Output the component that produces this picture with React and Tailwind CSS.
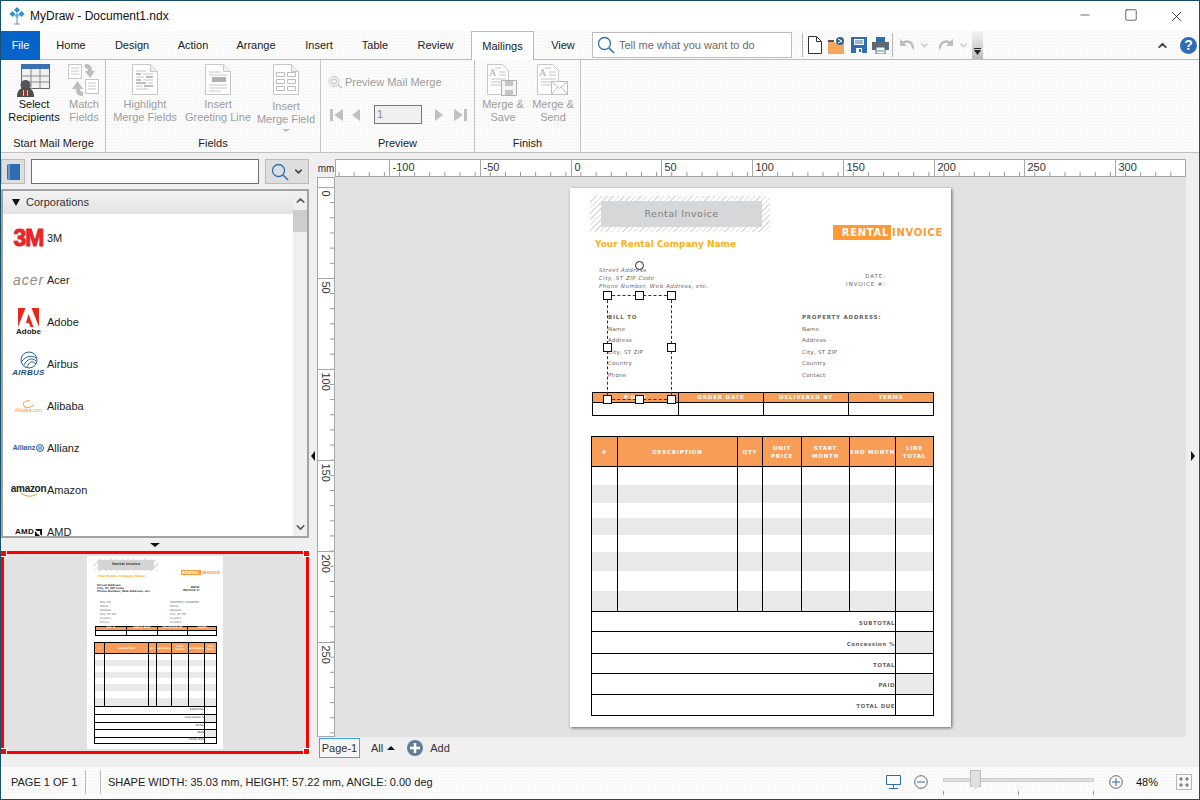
import { ChevronDown, ChevronUp, Minus, Square, X } from "lucide-react";

const texture = "bg-[#fbfbfb] bg-[radial-gradient(#f1f1f1_1px,transparent_1px)] bg-[length:3px_3px]";

const tabs = [
  ["Home", "w-[62px]"],
  ["Design", "w-[60px]"],
  ["Action", "w-[62px]"],
  ["Arrange", "w-[64px]"],
  ["Insert", "w-[62px]"],
  ["Table", "w-[50px]"],
  ["Review", "w-[71px]"],
];

function AppLogo() {
  return (
    <svg viewBox="0 0 16 18" className="w-4 h-[18px]">
      <path d="M8 10v7M5 17h6" stroke="#7a8a94" strokeWidth="1" fill="none" />
      <path d="M8 0l3 3-3 3-3-3z" fill="#2f8fd0" />
      <path d="M3.5 4l3 3-3 3-3-3z" fill="#2f8fd0" />
      <path d="M12.5 4l3 3-3 3-3-3z" fill="#2f8fd0" />
      <path d="M8 6l2.5 2.5L8 11 5.5 8.5z" fill="#58b0e4" />
    </svg>
  );
}

function TitleBar() {
  return (
    <div className="h-[30px] flex items-center bg-white shrink-0">
      <div className="ml-[8px]">
        <AppLogo />
      </div>
      <span className="ml-[5px] text-[12px] text-[#111]">MyDraw - Document1.ndx</span>
      <div className="ml-auto flex">
        <div className="w-[46px] flex justify-center">
          <Minus className="w-[14px] h-[14px]" strokeWidth={1} />
        </div>
        <div className="w-[46px] flex justify-center">
          <Square className="w-[14px] h-[14px]" strokeWidth={1} />
        </div>
        <div className="w-[45px] flex justify-center">
          <X className="w-[17px] h-[17px]" strokeWidth={1} />
        </div>
      </div>
    </div>
  );
}

function QuickIcons() {
  return (
    <div className="flex items-center h-full">
      <div className="ml-[10px] w-px h-[24px] bg-[#b5b5b5]" />
      <svg viewBox="0 0 14 18" className="ml-[5px] w-[14px] h-[18px]">
        <path d="M.5.5h8l5 5v12H.5z M8.5.5v5h5" fill="#fff" stroke="#333" />
      </svg>
      <svg viewBox="0 0 17 17" className="ml-[6px] w-[17px] h-[17px]">
        <path d="M0 4h6l1 2h9v11H0z" fill="#f6a65a" />
        <path d="M0 3h6v2H0z" fill="#555" />
        <circle cx="12" cy="4" r="4" fill="#33638f" />
        <path d="M10 2l4 2-4 2" fill="none" stroke="#fff" strokeWidth="1" />
      </svg>
      <svg viewBox="0 0 16 16" className="ml-[6px] w-[16px] h-[16px]">
        <path d="M0 0h16v16H0z" fill="#2f6cb0" />
        <path d="M3 2h10v6H3z" fill="#fff" />
        <path d="M4 4h8M4 6h8" stroke="#2f6cb0" strokeWidth="1" />
        <path d="M5 11h6v5H5z" fill="#fff" />
        <path d="M8 12h2v3H8z" fill="#2f6cb0" />
      </svg>
      <svg viewBox="0 0 17 17" className="ml-[5px] w-[17px] h-[17px]">
        <path d="M4 0h9v5H4z" fill="#2f6cb0" />
        <path d="M0 5h17v8H0z" fill="#5d6b74" />
        <path d="M4 10h9v7H4z" fill="#fff" stroke="#5d6b74" />
        <path d="M5 14h7" stroke="#7fd0e0" strokeWidth="2" />
      </svg>
      <div className="ml-[3px] w-px h-[24px] bg-[#b5b5b5]" />
      <svg viewBox="0 0 16 14" className="ml-[6px] w-[16px] h-[14px]">
        <path d="M1 1v7h7L5.5 5.5C8 4 12 5 13 10l2 2c1-7-5-12-11-8.500z" fill="#bdbdbd" />
      </svg>
      <ChevronDown className="ml-[4px] w-[11px] h-[11px] text-[#c4c4c4]" strokeWidth={3} />
      <svg viewBox="0 0 16 14" className="ml-[8px] w-[16px] h-[14px]">
        <path d="M15 1v7H8l2.500-2.500C8 4 4 5 3 10l-2 2c-1-7 5-12 11-8.500z" fill="#bdbdbd" />
      </svg>
      <ChevronDown className="ml-[4px] w-[11px] h-[11px] text-[#c4c4c4]" strokeWidth={3} />
      <div className="ml-[3px] w-[11px] h-full bg-gradient-to-b from-[#f4f4f4] to-[#bcbcbc] flex items-end justify-center pb-[4px]">
        <svg viewBox="0 0 7 7" className="w-[7px] h-[7px]">
          <path d="M0 0h7v1H0zM0 2h7L3.500 7z" fill="#222" />
        </svg>
      </div>
    </div>
  );
}

function TabBar() {
  return (
    <div className={`h-[29px] flex shrink-0 border-b border-[#b9b9b9] text-[11px] text-[#222] ${texture}`}>
      <div className="w-[39px] h-[29px] bg-[#0563c9] text-white flex items-center justify-center">File</div>
      {tabs.map(([name, width]) => (
        <div key={name} className={`${width} flex items-center justify-center`}>
          {name}
        </div>
      ))}
      <div className="w-[63px] h-[29px] bg-white border border-b-0 border-[#b9b9b9] flex items-center justify-center">
        Mailings
      </div>
      <div className="w-[58px] flex items-center justify-center">View</div>
      <div className="w-[200px] h-[26px] mt-[1px] bg-white border border-[#bdbdbd] flex items-center">
        <svg viewBox="0 0 18 18" className="ml-[4px] w-[18px] h-[18px]">
          <circle cx="7.500" cy="7.500" r="6" fill="none" stroke="#2d72b8" strokeWidth="1.300" />
          <path d="M12 12l5 5" stroke="#2d72b8" strokeWidth="1.600" />
        </svg>
        <span className="ml-[4px] text-[#6b6b6b]">Tell me what you want to do</span>
      </div>
      <QuickIcons />
      <div className="ml-auto flex items-center">
        <ChevronUp className="w-[13px] h-[13px] text-[#444]" strokeWidth={3.500} />
        <div className="ml-[11px] mr-[2px] w-[17px] h-[17px] rounded-full bg-[#2f6db5] text-white text-[14px] font-bold flex items-center justify-center">
          ?
        </div>
      </div>
    </div>
  );
}

function Page({ children, className = "" }) {
  return (
    <svg viewBox="0 0 26 31" className={`w-[26px] h-[31px] ${className}`}>
      <path d="M.5.5h18l7 7v23H.5z" fill="#fff" stroke="#c8c8c8" />
      <path d="M18.500.5v7h7" fill="#efefef" stroke="#c8c8c8" />
      {children}
    </svg>
  );
}

const icons = {
  select: (
    <svg viewBox="0 0 34 33" className="w-[34px] h-[33px]">
      <path d="M4.500.5h28v24h-28z" fill="#f1f1f1" stroke="#666" />
      <path d="M4 0h29v5H4z" fill="#3a6fb0" />
      <path d="M4 12h29M4 18h29M14 5v20M23 5v20" stroke="#888" />
      <circle cx="8.500" cy="21" r="5" fill="#555" />
      <path d="M0 33c0-7 3-9 8.500-9s8.500 2 8.500 9z" fill="#4c4c4c" />
      <path d="M7.500 25h2v7h-2z" fill="#e2231a" />
      <path d="M6 26h1v6H6zM10 26h1v6h-1z" fill="#f4d23c" />
    </svg>
  ),
  match: (
    <svg viewBox="0 0 32 32" className="w-[32px] h-[32px]">
      <path d="M.500.500h13v14H.500zM17.500 15.500h13v14h-13z" fill="#fff" stroke="#c4c4c4" />
      <path d="M3 4h8M3 7h8M3 10h8M20 19h8M20 22h8M20 25h8" stroke="#c8c8c8" />
      <path d="M17 0c5 0 7 2 7 7h3l-5 7-5-7h3c0-2-1-3-3-3z" fill="#bdbdbd" />
      <path d="M15 32c-5 0-7-2-7-7H4l5.500-8 5.500 8h-3c0 2 1 3 3 3z" fill="#bdbdbd" />
    </svg>
  ),
  highlight: (
    <Page>
      <path d="M4 7h10M4 10h5M11 10h10M4 13h8M14 13h7M4 16h5M11 16h10M4 19h10M16 19h5M4 22h6M12 22h9M4 25h12" stroke="#c4c4c4" />
      <path d="M4 10h5M14 13h7M4 16h5M4 19h10M12 22h9" stroke="#9a9a9a" />
    </Page>
  ),
  greeting: (
    <Page>
      <path d="M4 8h12M4 11h18M4 21h18M4 24h18M4 27h12" stroke="#c8c8c8" />
      <path d="M7 13h14v5H7z" fill="#b0b0b0" />
    </Page>
  ),
  field: (
    <Page>
      <path d="M3.500 8.500h8v4h-8zM14.500 8.500h8v4h-8zM3.500 15.500h8v4h-8zM14.500 15.500h8v4h-8zM3.500 22.500h8v4h-8zM14.500 22.500h8v4h-8z" fill="none" stroke="#bdbdbd" />
    </Page>
  ),
  save: (
    <svg viewBox="0 0 32 32" className="w-[32px] h-[32px]">
      <path d="M.500.500h15l6 6v24H.500z" fill="#fff" stroke="#c8c8c8" />
      <path d="M8 4h6M12 8h7M12 11h7M4 15h15M4 18h15M4 21h10" stroke="#c4c4c4" />
      <text x="2" y="12" fontSize="10" fill="#aaa" fontFamily="Liberation Serif, serif">A</text>
      <path d="M14.500 16.500h15v15h-15z" fill="#f3f3f3" stroke="#b0b0b0" />
      <path d="M18 17h8v5h-8zM18 26h8v5h-8z" fill="#c4c4c4" />
    </svg>
  ),
  send: (
    <svg viewBox="0 0 32 32" className="w-[32px] h-[32px]">
      <path d="M.500.500h15l6 6v24H.500z" fill="#fff" stroke="#c8c8c8" />
      <path d="M8 4h6M12 8h7M12 11h7M4 15h15M4 18h10M4 21h10" stroke="#c4c4c4" />
      <text x="2" y="12" fontSize="10" fill="#aaa" fontFamily="Liberation Serif, serif">A</text>
      <path d="M14.500 17.500h16v13h-16z" fill="#fff" stroke="#bdbdbd" />
      <path d="M14.500 17.500l8 7 8-7M14.500 30.500l6-7M30.500 30.500l-6-7" fill="none" stroke="#bdbdbd" />
    </svg>
  ),
};

function RibbonButton({ icon, lines, active, width, down }) {
  return (
    <div className={`${width} flex flex-col items-center text-center leading-[13px] ${active ? "text-[#111]" : "text-[#9d9d9d]"}`}>
      <div className={`h-[34px] mt-[4px] ${down ? "mb-[2px]" : ""} flex items-start justify-center`}>{icon}</div>
      <div className="whitespace-nowrap">{lines[0]}</div>
      <div className="whitespace-nowrap">{lines[1]}</div>
      {down && <div className="mt-[3px] w-0 h-0 border-x-[4px] border-x-transparent border-t-[3px] border-t-[#bcbcbc]" />}
    </div>
  );
}

function Group({ label, width, children }) {
  return (
    <div className={`${width} h-full flex flex-col border-r border-[#c6c6c6]`}>
      <div className="flex-1">{children}</div>
      <div className="h-[18px] flex items-center justify-center text-[#222]">{label}</div>
    </div>
  );
}

function NavIcon({ d, width, box }) {
  return (
    <svg viewBox={box} className={`${width} h-[12px]`}>
      <path d={d} fill="#c0c0c0" />
    </svg>
  );
}

function Ribbon() {
  return (
    <div className={`h-[93px] shrink-0 flex border-b border-[#c0c0c0] text-[11px] ${texture}`}>
      <Group label="Start Mail Merge" width="w-[105px] pl-px">
        <div className="flex -ml-px">
          <RibbonButton icon={icons.select} lines={["Select", "Recipients"]} active width="w-[66px]" />
          <RibbonButton icon={icons.match} lines={["Match", "Fields"]} width="w-[34px]" />
        </div>
      </Group>
      <Group label="Fields" width="w-[215px]">
        <div className="flex">
          <RibbonButton icon={icons.highlight} lines={["Highlight", "Merge Fields"]} width="w-[78px]" />
          <RibbonButton icon={icons.greeting} lines={["Insert", "Greeting Line"]} width="w-[68px]" />
          <RibbonButton icon={icons.field} lines={["Insert", "Merge Field"]} width="w-[68px]" down />
        </div>
      </Group>
      <Group label="Preview" width="w-[154px]">
        <div className="pt-[15px]">
          <div className="flex items-center h-[14px] text-[#9d9d9d] whitespace-nowrap">
            <svg viewBox="0 0 16 14" className="ml-[6px] w-[16px] h-[14px]">
              <circle cx="7" cy="6.500" r="5" fill="#f4f4f4" stroke="#c8c8c8" />
              <circle cx="7" cy="6.500" r="2.500" fill="none" stroke="#bbb" />
              <path d="M11 10l4 3" stroke="#c0c0c0" strokeWidth="1.500" />
            </svg>
            <span className="ml-[2px]">Preview Mail Merge</span>
          </div>
          <div className="flex items-center mt-[16px]">
            <NavIcon box="0 0 14 12" width="ml-[8px] w-[14px]" d="M1 0h3v12H1zM14 0v12L5 6z" />
            <NavIcon box="0 0 10 12" width="ml-[8px] w-[10px]" d="M9 0v12L1 6z" />
            <div className="ml-[13px] w-[48px] h-[19px] bg-[#f0f0f0] border border-[#777] flex items-center pl-[2px] text-[#8a8a8a]">
              1
            </div>
            <NavIcon box="0 0 10 12" width="ml-[12px] w-[10px]" d="M1 0v12l8-6z" />
            <NavIcon box="0 0 14 12" width="ml-[10px] w-[14px]" d="M0 0v12l9-6zM10 0h3v12h-3z" />
          </div>
        </div>
      </Group>
      <Group label="Finish" width="w-[106px]">
        <div className="flex pl-px">
          <RibbonButton icon={icons.save} lines={["Merge &", "Save"]} width="w-[54px]" />
          <RibbonButton icon={icons.send} lines={["Merge &", "Send"]} width="w-[46px]" />
        </div>
      </Group>
    </div>
  );
}

const corporations = [
  {
    name: "3M",
    logo: <span className="text-[23px] leading-none font-bold tracking-[-1px] text-[#e8262a] [-webkit-text-stroke:1px_#e8262a]">3M</span>,
  },
  {
    name: "Acer",
    logo: <span className="text-[14px] leading-none italic text-[#8d8d82] tracking-[1px]">acer</span>,
  },
  {
    name: "Adobe",
    logo: (
      <div className="flex flex-col items-center">
        <svg viewBox="0 0 21 19" className="w-[21px] h-[19px]">
          <path d="M0 0h7.500L0 19zM21 0h-7.500L21 19zM10.500 6l5 13h-3l-1.500-4H8z" fill="#e8261c" />
        </svg>
        <span className="text-[8px] leading-[9px] font-bold text-[#222]">Adobe</span>
      </div>
    ),
  },
  {
    name: "Airbus",
    logo: (
      <div className="flex flex-col items-center">
        <svg viewBox="0 0 18 18" className="w-[18px] h-[18px]">
          <circle cx="9" cy="9" r="8" fill="none" stroke="#28608f" strokeWidth="1" />
          <path d="M2 10c4-5 10-6 14-3M4 14c3-6 8-8 12-4M7 16c2-5 5-7 9-3" fill="none" stroke="#28608f" strokeWidth="1" />
        </svg>
        <span className="text-[8px] leading-[8px] font-bold italic tracking-[0.300px] text-[#17507f]">AIRBUS</span>
      </div>
    ),
  },
  {
    name: "Alibaba",
    logo: (
      <div className="flex flex-col items-center">
        <svg viewBox="0 0 14 8" className="w-[14px] h-[8px]">
          <path d="M9 1C4 0 1 3 3 6s7 1 10-1" fill="none" stroke="#f49a3c" strokeWidth="1" />
        </svg>
        <span className="text-[5px] leading-[5px] text-[#f49a3c]">Alibaba.com</span>
      </div>
    ),
  },
  {
    name: "Allianz",
    logo: (
      <div className="flex items-center gap-px">
        <span className="text-[7px] font-bold text-[#1a63ad]">Allianz</span>
        <svg viewBox="0 0 8 8" className="w-[8px] h-[8px]">
          <circle cx="4" cy="4" r="3.500" fill="none" stroke="#1a63ad" />
          <path d="M3 2v4M5 2v4" stroke="#1a63ad" />
        </svg>
      </div>
    ),
  },
  {
    name: "Amazon",
    logo: (
      <div className="flex flex-col items-center">
        <span className="text-[10px] leading-[9px] font-bold tracking-[-0.300px] text-[#222]">amazon</span>
        <svg viewBox="0 0 20 4" className="w-[20px] h-[4px]">
          <path d="M2 0c5 4 11 4 16 1" fill="none" stroke="#f39a20" strokeWidth="1" />
        </svg>
      </div>
    ),
  },
  {
    name: "AMD",
    logo: (
      <div className="flex items-center gap-px">
        <span className="text-[8px] font-bold tracking-[0.300px] text-[#111]">AMD</span>
        <svg viewBox="0 0 7 7" className="w-[7px] h-[7px]">
          <path d="M0 0h7v7L5 5V2H2zM0 2l2 2v1h1l2 2H0z" fill="#111" />
        </svg>
      </div>
    ),
  },
];

function CorporationList() {
  return (
    <div className="mt-[5px] h-[349px] border-2 border-[#a3a3a3] flex overflow-hidden bg-white">
      <div className="flex-1 min-w-0">
        <div className="h-[23px] flex items-center bg-gradient-to-b from-[#f2f2f2] to-[#e3e3e3] text-[11px] text-[#333]">
          <div className="ml-[9px] w-0 h-0 border-x-[4px] border-x-transparent border-t-[7px] border-t-[#111]" />
          <span className="ml-[6px]">Corporations</span>
        </div>
        <div className="pt-[3px]">
          {corporations.map((item) => (
            <div key={item.name} className="h-[42px] flex items-center text-[11px] text-[#222]">
              <div className="ml-[9px] w-[33px] flex justify-center">{item.logo}</div>
              <span className="ml-[2px]">{item.name}</span>
            </div>
          ))}
        </div>
      </div>
      <div className="w-[14px] bg-[#f0f0f0] flex flex-col items-center">
        <ChevronUp className="mt-[3px] w-[13px] h-[13px] text-[#606060]" strokeWidth={3} />
        <div className="mt-[3px] w-full h-[22px] bg-[#cdcdcd]" />
        <ChevronDown className="mt-auto mb-[2px] w-[13px] h-[13px] text-[#606060]" strokeWidth={3} />
      </div>
    </div>
  );
}

const hatch = "bg-[repeating-linear-gradient(135deg,#dcdcdc_0,#dcdcdc_1px,#ffffff_1px,#ffffff_4px)]";
const stripe = "bg-[#e9e9e9]";

function ItemsTable({ columns, head, rows, totals, totalCol, headClass, headText, totalText, className }) {
  return (
    <div className={`${className} border border-black bg-white`}>
      <div className={`grid ${columns} ${headClass} bg-[#f79d58] border-b border-black`}>
        {head.map((label, i) => (
          <div key={i} className={`flex items-center justify-center text-center text-white font-bold ${headText} ${i ? "border-l border-black" : ""}`}>
            {label}
          </div>
        ))}
      </div>
      {rows.map((height, r) => (
        <div key={r} className={`grid ${columns} ${height} ${r % 2 ? stripe : ""}`}>
          {head.map((_, i) => (
            <div key={i} className={i ? "border-l border-black" : ""} />
          ))}
        </div>
      ))}
      {totals.map(([label, height], r) => (
        <div key={label} className={`grid ${totalCol} ${height} border-t border-black`}>
          <div className={`flex items-center justify-end font-bold text-[#666] ${totalText}`}>{label}</div>
          <div className={`border-l border-black ${r % 2 ? stripe : ""}`} />
        </div>
      ))}
    </div>
  );
}

const tableHead = ["#", "DESCRIPTION", "QTY", "UNIT PRICE", "START MONTH", "END\u00A0MONTH", "LINE TOTAL"];

function OrderTable({ columns, headClass, bodyClass, textClass, className }) {
  const labels = ["P.O. #", "ORDER DATE", "DELIVERED BY", "TERMS"];
  return (
    <div className={`${className} border border-black`}>
      <div className={`grid ${columns} ${headClass} bg-[#f79d58] border-b border-black`}>
        {labels.map((label, i) => (
          <div key={label} className={`flex items-center justify-center text-white font-bold ${textClass} ${i ? "border-l border-black" : ""}`}>
            {label}
          </div>
        ))}
      </div>
      <div className={`grid ${columns} ${bodyClass} bg-white`}>
        {labels.map((label, i) => (
          <div key={label} className={i ? "border-l border-black" : ""} />
        ))}
      </div>
    </div>
  );
}

function Thumbnail() {
  return (
    <div className="relative h-[203px] border-[3px] border-[#ff0000] bg-[#e2e2e2] flex justify-center pt-[2px] overflow-visible">
      <div className="w-[136px] h-[193px] bg-white font-['DejaVu_Sans'] text-[#555] leading-none">
        <div className="flex justify-between pt-[3px]">
          <div className="ml-[7px]">
            <div className={`w-[64px] h-[12px] ${hatch} px-[4px] py-px`}>
              <div className="h-full bg-[#d4d4d4] flex items-center justify-center text-[3.500px] font-bold text-[#444]">
                Rental Invoice
              </div>
            </div>
            <div className="mt-[4px] ml-[4px] text-[3px] font-bold text-[#ffb020]">Your Rental Company Name</div>
          </div>
          <div className="mt-[11px] mr-[3px] flex items-center text-[4px] font-bold h-[5px]">
            <span className="w-[20px] h-[5px] bg-[#ff9933] text-white flex items-center justify-center">RENTAL</span>
            <span className="ml-px text-[#ff9933]">INVOICE</span>
          </div>
        </div>
        <div className="flex justify-between mt-[6px] text-[2.800px] text-[#444] font-bold">
          <div className="ml-[10px] leading-[3px]">
            <div>Street Address</div>
            <div>City, ST ZIP Code</div>
            <div>Phone Number, Web Address, etc.</div>
          </div>
          <div className="mt-[2px] mr-[23px] text-right leading-[3px]">
            <div>DATE:</div>
            <div>INVOICE #:</div>
          </div>
        </div>
        <div className="flex mt-[7px] text-[2.800px] leading-[4px] text-[#666]">
          <div className="ml-[13px] w-[70px]">
            <div>BILL TO</div>
            <div>Name</div>
            <div>Address</div>
            <div>City, ST ZIP</div>
            <div>Country</div>
            <div>Phone</div>
          </div>
          <div>
            <div>PROPERTY ADDRESS:</div>
            <div>Name</div>
            <div>Address</div>
            <div>City, ST ZIP</div>
            <div>Country</div>
            <div>Contact</div>
          </div>
        </div>
        <OrderTable
          className="ml-[8px] mt-[2px] w-[122px]"
          columns="grid-cols-[30px_31px_30px_29px]"
          headClass="h-[4px]"
          bodyClass="h-[4px]"
          textClass="text-[2.500px]"
        />
        <ItemsTable
          className="ml-[7px] mt-[6px] w-[123px]"
          columns="grid-cols-[9px_44px_8px_15px_17px_16px_12px]"
          totalCol="grid-cols-[109px_12px]"
          head={tableHead}
          rows={["h-[6px]", "h-[6px]", "h-[6px]", "h-[6px]", "h-[6px]", "h-[7px]", "h-[7px]", "h-[8px]"]}
          totals={[
            ["SUBTOTAL", "h-[8px]"],
            ["Concession %", "h-[8px]"],
            ["TOTAL", "h-[7px]"],
            ["PAID", "h-[8px]"],
            ["TOTAL DUE", "h-[6px]"],
          ]}
          headClass="h-[11px]"
          headText="text-[2.200px] leading-[3px]"
          totalText="text-[2.500px]"
        />
      </div>
      {["-left-[3px] -top-[3px]", "-right-[3px] -top-[3px]", "-left-[3px] -bottom-[3px]", "-right-[3px] -bottom-[3px]"].map((pos) => (
        <div key={pos} className={`absolute ${pos} w-[5px] h-[5px] bg-[#ff0000] outline outline-1 outline-white`} />
      ))}
    </div>
  );
}

function LeftPanel() {
  return (
    <div className="w-[308px] shrink-0 flex flex-col pt-[6px]">
      <div className="flex h-[25px]">
        <div className="w-[24px] bg-[#dedede] border border-[#bbb] flex items-center justify-center">
          <svg viewBox="0 0 13 16" className="w-[13px] h-[16px]">
            <path d="M0 1.500C0 .500 1 0 2 0h11v16H2c-1 0-2-.500-2-1.500z" fill="#2f6cb0" />
            <path d="M2 0v16" stroke="#a9c6e5" strokeWidth="1" />
          </svg>
        </div>
        <div className="ml-[6px] w-[228px] bg-white border border-[#707070]" />
        <div className="ml-[6px] w-[44px] bg-[#dedede] border border-[#bbb] flex items-center">
          <svg viewBox="0 0 18 18" className="ml-[5px] w-[18px] h-[18px]">
            <circle cx="7.500" cy="7.500" r="6" fill="none" stroke="#2d72b8" strokeWidth="1.300" />
            <path d="M12 12l5 5" stroke="#2d72b8" strokeWidth="1.600" />
          </svg>
          <ChevronDown className="ml-[4px] w-[11px] h-[11px] text-[#444]" strokeWidth={3.500} />
        </div>
      </div>
      <CorporationList />
      <div className="h-[13px] flex justify-center items-center">
        <div className="w-0 h-0 border-x-[5px] border-x-transparent border-t-[4px] border-t-[#111]" />
      </div>
      <Thumbnail />
    </div>
  );
}

const topMajors = [-100, -50, 0, 50, 100, 150, 200, 250, 300];

function TopRuler() {
  const minors = Array.from({ length: 57 }, (_, i) => 4 + i * 15.125);
  return (
    <svg width="851" height="18" className="block">
      <rect x="0.500" y="0.500" width="850" height="17" fill="#fff" stroke="#a8a8a8" />
      {minors.map((x) => (
        <line key={x} x1={x} x2={x} y1="13" y2="17" stroke="#999" />
      ))}
      {topMajors.map((v, i) => {
        const x = Math.round(54 + i * 90.75) + 0.5;
        return (
          <g key={v}>
            <line x1={x} x2={x} y1="0" y2="17" stroke="#a8a8a8" />
            <text x={x + 3} y="12" fontSize="11" fill="#333" fontFamily="Liberation Sans, sans-serif">
              {v}
            </text>
          </g>
        );
      })}
    </svg>
  );
}

function LeftRuler() {
  const minors = Array.from({ length: 37 }, (_, i) => 10.5 + i * 15.15);
  return (
    <svg width="18" height="560" className="block shrink-0">
      <rect x="0.500" y="0.500" width="17" height="559" fill="#fff" stroke="#a8a8a8" />
      {minors.map((y) => (
        <line key={y} x1="13" x2="17" y1={y} y2={y} stroke="#999" />
      ))}
      {[0, 50, 100, 150, 200, 250].map((v, i) => {
        const y = 10.5 + i * 91;
        return (
          <g key={v}>
            <line x1="0" x2="17" y1={y} y2={y} stroke="#a8a8a8" />
            <text x="5" y={y + 3} fontSize="11" fill="#333" fontFamily="Liberation Sans, sans-serif" transform={`rotate(90 5 ${y + 3})`}>
              {v}
            </text>
          </g>
        );
      })}
    </svg>
  );
}

const handles = [
  "-left-[5px] -top-[5px]",
  "left-[27px] -top-[5px]",
  "-right-[5px] -top-[5px]",
  "-left-[5px] top-[47px]",
  "-right-[5px] top-[47px]",
  "-left-[5px] -bottom-[5px]",
  "left-[27px] -bottom-[5px]",
  "-right-[5px] -bottom-[5px]",
];

function Selection() {
  return (
    <>
      <div className="absolute left-[65px] top-[73px] w-[9px] h-[9px] rounded-full border border-[#222]" />
      <div className="absolute left-[37px] top-[107px] w-[65px] h-[105px] border border-dashed border-[#333]">
        {handles.map((pos) => (
          <div key={pos} className={`absolute ${pos} w-[9px] h-[9px] bg-white border border-[#111]`} />
        ))}
      </div>
    </>
  );
}

function Invoice() {
  return (
    <div className="relative ml-[235px] mt-[11px] w-[381px] h-[539px] bg-white shadow-[1px_1px_3px_rgba(0,0,0,0.55)] font-['DejaVu_Sans'] text-[#666] leading-none">
      <div className="flex justify-between pt-[8px]">
        <div className="ml-[20px]">
          <div className={`w-[180px] h-[36px] ${hatch} pl-[11px] pr-[8px] py-[5px]`}>
            <div className="h-full bg-[#d6d7d8] flex items-center justify-center text-[9.500px] tracking-[0.500px] text-[#808080]">
              Rental Invoice
            </div>
          </div>
          <div className="mt-[8px] ml-[5px] text-[9px] font-bold text-[#ffb020]">
            Your Rental Company Name
          </div>
        </div>
        <div className="mt-[29px] mr-[8px] h-[15px] flex items-center text-[10px] font-bold tracking-[0.700px]">
          <div className="w-[58px] h-[15px] pt-px bg-[#ff9933] text-white flex items-center justify-end pr-[2px]">RENTAL</div>
          <div className="ml-px pt-px text-[#ff9933]">INVOICE</div>
        </div>
      </div>
      <div className="flex justify-between mt-[17px] text-[5.500px] leading-[8px]">
        <div className="ml-[29px] italic tracking-[0.500px]">
          <div>Street Address</div>
          <div>City, ST ZIP Code</div>
          <div>Phone Number, Web Address, etc.</div>
        </div>
        <div className="mt-[6px] mr-[65px] text-right tracking-[0.900px]">
          <div>DATE:</div>
          <div>INVOICE #:</div>
        </div>
      </div>
      <div className="flex mt-[22px] text-[5.500px] leading-[11.600px] tracking-[0.300px]">
        <div className="ml-[38px] w-[194px]">
          <div className="font-bold tracking-[0.800px]">BILL TO</div>
          <div>Name</div>
          <div>Address</div>
          <div>City, ST ZIP</div>
          <div>Country</div>
          <div>Phone</div>
        </div>
        <div>
          <div className="font-bold tracking-[0.800px]">PROPERTY ADDRESS:</div>
          <div>Name</div>
          <div>Address</div>
          <div>City, ST ZIP</div>
          <div>Country</div>
          <div>Contact</div>
        </div>
      </div>
      <OrderTable
        className="ml-[22px] mt-[10px] w-[342px]"
        columns="grid-cols-[85px_85px_85px_85px]"
        headClass="h-[10px]"
        bodyClass="h-[12px]"
        textClass="text-[5.500px] tracking-[0.800px] pt-px"
      />
      <ItemsTable
        className="ml-[21px] mt-[20px] w-[343px]"
        columns="grid-cols-[25px_120px_25px_39px_48px_46px_38px]"
        totalCol="grid-cols-[303px_38px]"
        head={tableHead}
        rows={["h-[18px]", "h-[18px]", "h-[15px]", "h-[17px]", "h-[17px]", "h-[19px]", "h-[20px]", "h-[20px]"]}
        totals={[
          ["SUBTOTAL", "h-[20px]"],
          ["Concession %", "h-[22px]"],
          ["TOTAL", "h-[20px]"],
          ["PAID", "h-[21px]"],
          ["TOTAL DUE", "h-[21px]"],
        ]}
        headClass="h-[30px]"
        headText="text-[5.500px] leading-[8px] tracking-[0.800px] pt-px"
        totalText="text-[5.500px] tracking-[0.500px] pt-[5px]"
      />
      <Selection />
    </div>
  );
}

function Workspace() {
  return (
    <div className="flex-1 min-w-0 flex">
      <div className="w-[8px] shrink-0 flex items-center justify-center pb-[8px]">
        <div className="w-0 h-0 border-y-[5px] border-y-transparent border-r-[4px] border-r-[#111]" />
      </div>
      <div className="w-[869px] shrink-0 flex flex-col pt-[6px]">
        <div className="flex h-[18px] items-center">
          <div className="w-[18px] text-[10px] text-[#333] text-center">mm</div>
          <TopRuler />
        </div>
        <div className="flex h-[560px]">
          <LeftRuler />
          <div className="w-[851px] bg-[#e2e2e2] overflow-hidden">
            <Invoice />
          </div>
        </div>
        <div className="flex items-center h-[22px] text-[11px] text-[#333]">
          <div className="ml-[2px] w-[41px] h-[20px] bg-[#f6f6f6] border border-[#45a2ea] flex items-center justify-center">
            Page-1
          </div>
          <span className="ml-[11px]">All</span>
          <div className="ml-[4px] w-0 h-0 border-x-[4px] border-x-transparent border-b-[4px] border-b-[#111]" />
          <svg viewBox="0 0 16 16" className="ml-[12px] w-[16px] h-[16px]">
            <circle cx="8" cy="8" r="8" fill="#5f7c99" />
            <path d="M8 3v10M3 8h10" stroke="#fff" strokeWidth="2.500" />
          </svg>
          <span className="ml-[7px]">Add</span>
        </div>
      </div>
      <div className="flex-1 flex items-center justify-center pb-[8px]">
        <div className="w-0 h-0 border-y-[5px] border-y-transparent border-l-[4px] border-l-[#111]" />
      </div>
    </div>
  );
}

function StatusBar() {
  return (
    <div className={`h-[32px] pb-[2px] shrink-0 flex items-center text-[11px] text-[#222] ${texture}`}>
      <span className="ml-[10px] w-[74px]">PAGE 1 OF 1</span>
      <div className="w-px h-[24px] bg-[#bdbdbd]" />
      <div className="ml-[14px] w-px h-[24px] bg-[#bdbdbd]" />
      <span className="ml-[7px]">SHAPE WIDTH: 35.03 mm, HEIGHT: 57.22 mm, ANGLE: 0.00 deg</span>
      <div className="ml-auto flex items-center">
        <svg viewBox="0 0 15 14" className="w-[15px] h-[14px]">
          <path d="M.5.5h14v9H.5z" fill="none" stroke="#2f6cb0" />
          <path d="M7.500 10v3M3 13.500h9" stroke="#2f6cb0" />
        </svg>
        <svg viewBox="0 0 14 14" className="ml-[13px] w-[14px] h-[14px]">
          <circle cx="7" cy="7" r="6.300" fill="none" stroke="#666" />
          <path d="M3 7h8" stroke="#2f6cb0" />
        </svg>
        <div className="relative ml-[15px] w-[151px] h-[24px]">
          <div className="absolute left-0 right-0 top-[8px] h-[4px] bg-[#dedede] border border-[#cfcfcf]" />
          <div className="absolute left-[27px] top-0 w-[11px] h-[17px] bg-[#e0e0e0] border border-[#bdbdbd]" />
          <div className="absolute left-[27.500px] top-[14px] w-[10px] h-[6px] bg-[#e0e0e0] [clip-path:polygon(0_0,100%_0,50%_100%)]" />
          <div className="absolute left-0 top-[21px] w-px h-[4px] bg-[#999]" />
          <div className="absolute left-[75px] top-[21px] w-px h-[4px] bg-[#999]" />
          <div className="absolute right-0 top-[21px] w-px h-[4px] bg-[#999]" />
        </div>
        <svg viewBox="0 0 14 14" className="ml-[15px] w-[14px] h-[14px]">
          <circle cx="7" cy="7" r="6.300" fill="none" stroke="#666" />
          <path d="M3 7h8M7 3v8" stroke="#2f6cb0" />
        </svg>
        <span className="ml-[13px] w-[22px] text-[#111]">48%</span>
        <svg viewBox="0 0 16 16" className="ml-[18px] mr-[7px] w-[16px] h-[16px]">
          <path d="M.5.5h15v15H.5z" fill="none" stroke="#777" strokeDasharray="1 1" />
          <path d="M5 3v4M3 5h4M11 3v4M9 5h4M5 9v4M3 11h4M11 9v4M9 11h4" stroke="#666" />
        </svg>
      </div>
    </div>
  );
}

export default function App() {
  return (
    <div className="w-[1200px] h-[800px] flex flex-col overflow-hidden bg-[#efefef] border border-[#17506e] font-['Liberation_Sans',sans-serif]">
      <TitleBar />
      <TabBar />
      <Ribbon />
      <div className="flex-1 min-h-0 flex">
        <LeftPanel />
        <Workspace />
      </div>
      <StatusBar />
    </div>
  );
}
